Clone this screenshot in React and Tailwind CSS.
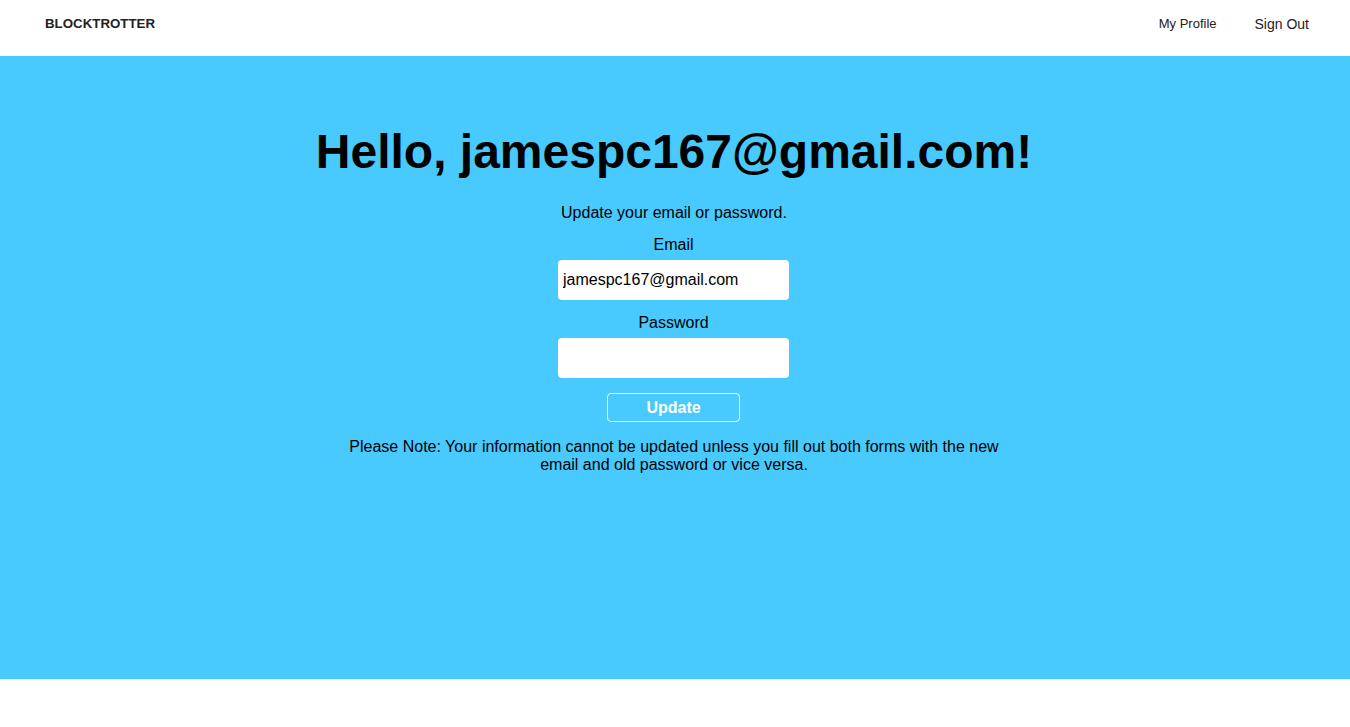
import { useState } from 'react'

function Navbar() {
  return (
    <nav className="h-14 bg-white flex justify-between items-start pt-[16px] pl-[45px] pr-[41px]">
      <a href="#" className="text-[13.3px] leading-[15px] font-bold text-[#222]">
        BLOCKTROTTER
      </a>
      <div className="flex items-start gap-[38px]">
        <a href="#" className="text-[13px] leading-[15px] text-[#222]">
          My Profile
        </a>
        <a href="#" className="text-[14px] leading-[16px] text-[#222]">
          Sign Out
        </a>
      </div>
    </nav>
  )
}

function App() {
  const [email, setEmail] = useState('jamespc167@gmail.com')
  const [password, setPassword] = useState('')

  return (
    <div className="min-h-[727px] bg-white font-['Liberation_Sans',Arial,sans-serif]">
      <Navbar />
      <main className="h-[623px] bg-[#48caff] flex flex-col items-center pr-[2px] text-black">
        <h1 className="mt-[68px] text-[48px] leading-[55px] font-bold">
          Hello, jamespc167@gmail.com!
        </h1>
        <p className="mt-[25px] text-base leading-[18px]">Update your email or password.</p>

        <form className="flex flex-col items-center pr-[1px]" onSubmit={(e) => e.preventDefault()}>
          <label htmlFor="email" className="mt-[14px] text-base leading-[18px]">
            Email
          </label>
          <input
            id="email"
            type="email"
            value={email}
            onChange={(e) => setEmail(e.target.value)}
            className="mt-[6px] w-[231px] h-[40px] rounded-[4px] bg-white pl-[5px] text-base text-black outline-none"
          />
          <label htmlFor="password" className="mt-[14px] text-base leading-[18px]">
            Password
          </label>
          <input
            id="password"
            type="password"
            value={password}
            onChange={(e) => setPassword(e.target.value)}
            className="mt-[6px] w-[231px] h-[40px] rounded-[4px] bg-white pl-[5px] text-base text-black outline-none"
          />
          <button
            type="submit"
            className="mt-[15px] w-[133px] h-[29px] rounded-[4px] border border-white text-white text-base font-bold leading-[18px]"
          >
            Update
          </button>
        </form>

        <p className="mt-[16px] w-[675px] text-center text-base leading-[18px]">
          Please Note: Your information cannot be updated unless you fill out both forms with the new
          email and old password or vice versa.
        </p>
      </main>
    </div>
  )
}

export default App
